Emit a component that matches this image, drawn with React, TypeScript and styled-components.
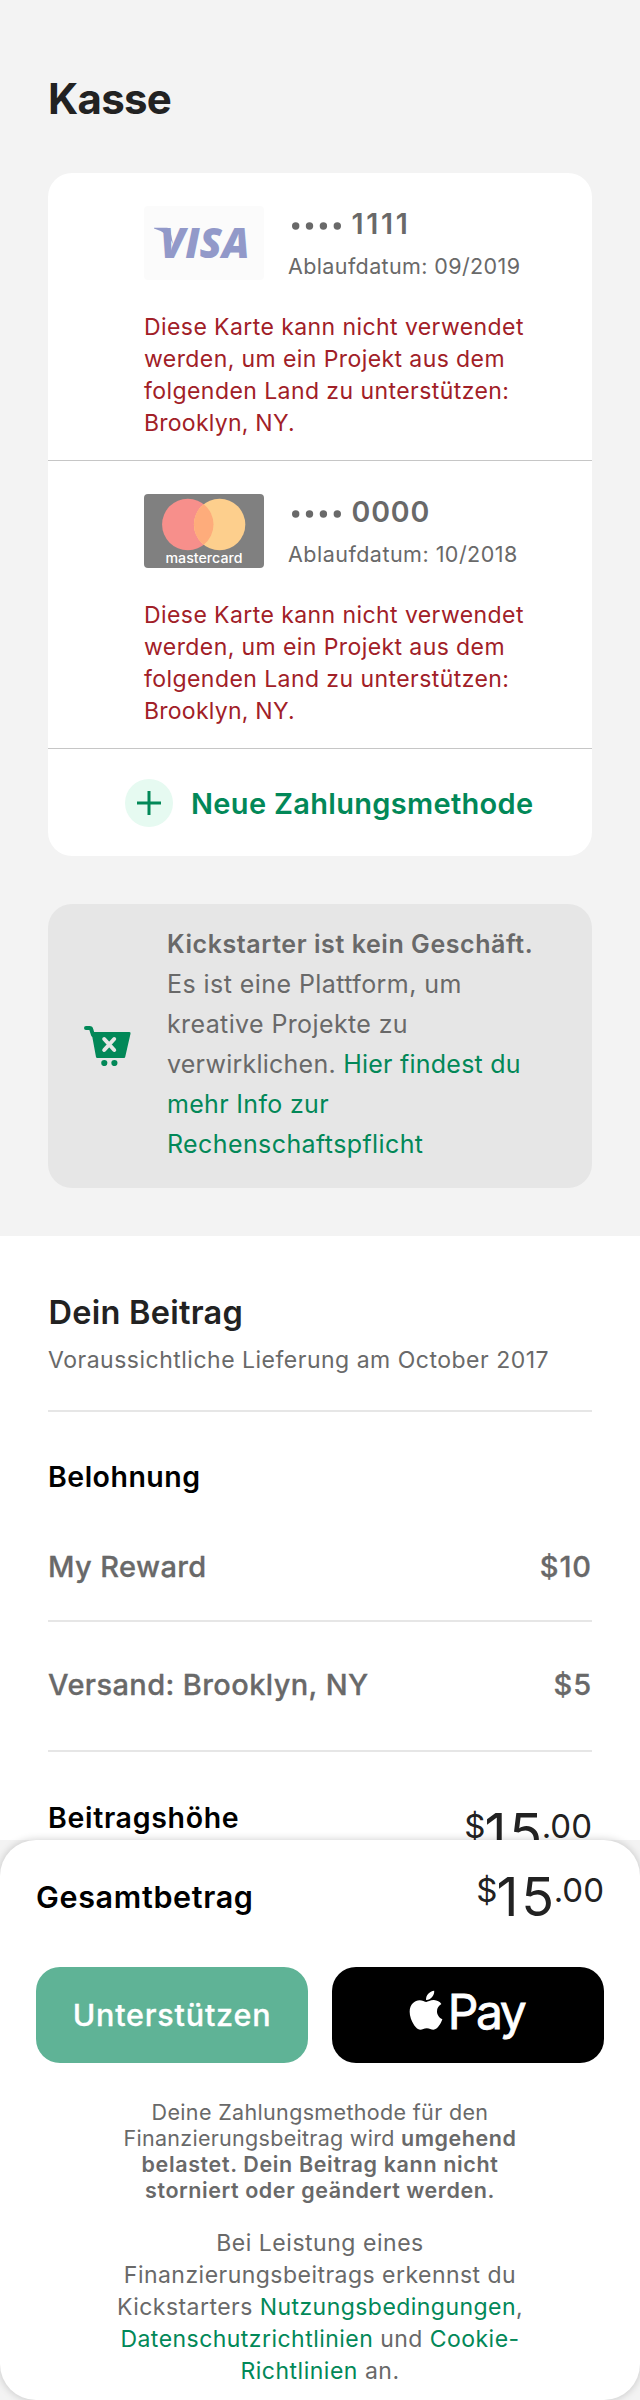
import React from "react";
import styled, { createGlobalStyle } from "styled-components";
import { FaApple } from "react-icons/fa";

const GlobalStyle = createGlobalStyle`
  * { box-sizing: border-box; }
  body {
    margin: 0;
    background: #f3f3f3;
    font-family: Inter, "Liberation Sans", sans-serif;
    -webkit-font-smoothing: antialiased;
  }
`;

const Screen = styled.main`
  width: 640px;
  height: 2400px;
  overflow: hidden;
  display: flex;
  flex-direction: column;
  background: #f3f3f3;
`;

const Line = styled.span<{ $track?: number }>`
  display: block;
  white-space: nowrap;
  letter-spacing: ${(p) => p.$track ?? 0}px;
`;

const Checkout = styled.section`
  height: 1236px;
  padding: 73px 48px 0;
`;

const Title = styled.h1`
  margin: 0 0 49px;
  padding-top: 1px;
  font-size: 42px;
  line-height: 50px;
  font-weight: 700;
  color: #222;
`;

const CardList = styled.div`
  background: #fff;
  border-radius: 24px;
  height: 683px;
`;

const CardRow = styled.article`
  height: 288px;
  padding: 33px 0 0 96px;
  border-bottom: 1px solid #c6c6c6;
`;

const CardHeader = styled.div`
  display: flex;
  gap: 24px;
  margin-bottom: 31px;
`;

const CardInfo = styled.div`
  display: flex;
  flex-direction: column;
  gap: 12px;
  padding-top: 1px;
  color: #696969;
`;

const CardNumber = styled.div`
  display: flex;
  align-items: center;
  height: 34px;
  padding-left: 3.6px;
  font-size: 28.5px;
  line-height: 34px;
  font-weight: 600;
`;

const Dots = styled.svg`
  display: block;
  margin: 3px 10px 0 0;
`;

const Expiry = styled.div`
  font-size: 21.5px;
  line-height: 26px;
`;

const Warning = styled.p`
  margin: 0;
  font-size: 23px;
  line-height: 32px;
  color: #a12027;
`;

const AddMethod = styled.div`
  height: 107px;
  padding-left: 77px;
  display: flex;
  align-items: center;
  gap: 18px;
  color: #028858;
  font-size: 29px;
  line-height: 36px;
  font-weight: 600;

  & > span {
    padding-top: 3px;
  }
`;

const Notice = styled.aside`
  height: 284px;
  margin-top: 48px;
  padding: 20px 0 24px 36px;
  border-radius: 24px;
  background: #e6e6e6;
  display: flex;
  align-items: center;
  gap: 36px;
`;

const NoticeText = styled.p`
  margin: 0;
  font-size: 25px;
  line-height: 40px;
  color: #696969;
`;

const CartIcon = styled.svg`
  display: block;
  flex: none;
  margin-top: 4px;
`;

const Strong = styled.strong<{ $track?: string }>`
  font-weight: 600;
  letter-spacing: ${(p) => p.$track ?? "inherit"};
`;

const Link = styled.a`
  color: #028858;
`;

const Summary = styled.section`
  height: 604px;
  overflow: hidden;
  background: #fff;
  padding: 57px 48px 0;
`;

const SummaryTitle = styled.h2`
  margin: 0 0 13px;
  padding-left: 0.5px;
  font-size: 32.5px;
  line-height: 40px;
  font-weight: 600;
  color: #222;
`;

const Delivery = styled.div`
  height: 66px;
  border-bottom: 2px solid #e6e6e6;
  font-size: 23px;
  line-height: 28px;
  color: #696969;
`;

const GroupTitle = styled.h3`
  margin: 47px 0 0;
  font-size: 28.5px;
  line-height: 36px;
  font-weight: 600;
  color: #000;
`;

const AmountRow = styled.div<{ $top: number; $bottom: number }>`
  display: flex;
  justify-content: space-between;
  padding: ${(p) => p.$top}px 0 ${(p) => p.$bottom}px;
  border-bottom: 2px solid #e6e6e6;
  font-size: 29px;
  line-height: 36px;
  font-weight: 500;
  -webkit-text-stroke: 0.3px #696969;
  color: #696969;
`;

const PledgeRow = styled.div`
  display: flex;
  justify-content: space-between;
  align-items: flex-start;
  padding-top: 48px;
`;

const PledgeLabel = styled.div`
  font-size: 28.5px;
  line-height: 36px;
  font-weight: 600;
  color: #000;
`;

const PriceBox = styled.div<{ $drop?: number }>`
  display: flex;
  align-items: flex-start;
  margin-top: ${(p) => p.$drop ?? 0}px;
  color: #222;
`;

const PriceSmall = styled.span`
  padding-top: 4px;
  font-size: 33px;
  line-height: 33px;
`;

const PriceMain = styled.span`
  margin: 0 -3.5px 0 -1px;
  font-size: 54px;
  line-height: 54px;
  letter-spacing: 3px;
`;

const Footer = styled.footer`
  position: relative;
  height: 560px;
  padding: 30px 36px 0;
  border-radius: 36px;
  background: #fff;
  box-shadow: 0 0 8px rgba(0, 0, 0, 0.2);
`;

const TotalRow = styled.div`
  display: flex;
  justify-content: space-between;
  height: 54px;
`;

const TotalLabel = styled.div`
  font-size: 30.5px;
  line-height: 54px;
  font-weight: 600;
`;

const Buttons = styled.div`
  display: flex;
  gap: 24px;
  margin: 43px 0 36px;
`;

const PayButton = styled.button<{ $bg: string }>`
  width: 272px;
  height: 96px;
  border: 0;
  padding: 0;
  border-radius: 24px;
  background: ${(p) => p.$bg};
  color: #fff;
  font-family: inherit;
  font-size: 30.5px;
  line-height: 36px;
  font-weight: 500;
  -webkit-text-stroke: 0.3px #fff;
  display: flex;
  align-items: center;
  justify-content: center;
`;

const AppleMark = styled(FaApple)`
  width: 34px;
  height: 44.5px;
  margin: 0 4.5px 9px 0;
`;

const PayWord = styled.span`
  padding-bottom: 6px;
  margin-right: 2.5px;
  font-size: 48px;
  line-height: 58px;
  font-weight: 400;
  -webkit-text-stroke: 0.8px #fff;
  letter-spacing: -2.4px;
`;

const Legal = styled.p<{ $size: number; $leading: number }>`
  margin: 0 0 24px;
  text-align: center;
  font-size: ${(p) => p.$size}px;
  line-height: ${(p) => p.$leading}px;
  color: #696969;
`;

const VisaLogo = () => (
  <svg width="120" height="74" viewBox="0 0 120 74">
    <rect width="120" height="74" rx="4" fill="#fbfbfb" />
    <path d="M10 21.7H23Q25.5 21.7 26.2 24L29 38Q24 26.5 10 22.6Z" fill="#9299c9" />
    <text x="16" y="51.5" textLength="89.5" lengthAdjust="spacingAndGlyphs" fontFamily="Open Sans" fontSize="42" fontWeight="800" fontStyle="italic" fill="#9299c9">
      VISA
    </text>
  </svg>
);

const MastercardLogo = () => (
  <svg width="120" height="74" viewBox="0 0 120 74">
    <rect width="120" height="74" rx="4" fill="#808080" />
    <circle cx="43.8" cy="30.5" r="25.7" fill="#f78f8b" />
    <circle cx="75.6" cy="30.5" r="25.7" fill="#fdcf8d" />
    <path d="M59.7 10.3A25.7 25.7 0 0 1 59.7 50.7A25.7 25.7 0 0 1 59.7 10.3Z" fill="#feac7b" />
    <text x="21.5" y="69" textLength="77" lengthAdjust="spacingAndGlyphs" fontFamily="Inter" fontSize="13.5" fontWeight="500" fill="#fff">
      mastercard
    </text>
  </svg>
);

const PlusIcon = () => (
  <svg width="48" height="48" viewBox="0 0 48 48">
    <circle cx="24" cy="24" r="24" fill="#e6faf1" />
    <path d="M12 24H36M24 12V36" stroke="#028858" strokeWidth="3" />
  </svg>
);

type CardProps = { logo: React.ReactNode; digits: string; expiry: string; digitTrack: number; expiryTrack: number };

const SavedCard = ({ logo, digits, expiry, digitTrack, expiryTrack }: CardProps) => (
  <CardRow>
    <CardHeader>
      {logo}
      <CardInfo>
        <CardNumber>
          <Dots width="50" height="8" viewBox="0 0 50 8" fill="#696969">
            <circle cx="3.7" cy="4" r="3.7" />
            <circle cx="17.5" cy="4" r="3.7" />
            <circle cx="31.4" cy="4" r="3.7" />
            <circle cx="45.3" cy="4" r="3.7" />
          </Dots>
          <Line $track={digitTrack}>{digits}</Line>
        </CardNumber>
        <Expiry><Line $track={expiryTrack}>Ablaufdatum: {expiry}</Line></Expiry>
      </CardInfo>
    </CardHeader>
    <Warning>
      <Line $track={0.42}>Diese Karte kann nicht verwendet</Line>
      <Line $track={0.41}>werden, um ein Projekt aus dem</Line>
      <Line $track={0.43}>folgenden Land zu unterstützen:</Line>
      <Line $track={0.25}>Brooklyn, NY.</Line>
    </Warning>
  </CardRow>
);

const Price = ({ drop }: { drop?: number }) => (
  <PriceBox $drop={drop}>
    <PriceSmall>$</PriceSmall>
    <PriceMain>15</PriceMain>
    <PriceSmall>.00</PriceSmall>
  </PriceBox>
);

export default function App() {
  return (
    <Screen>
      <GlobalStyle />
      <Checkout>
        <Title><Line $track={-0.7}>Kasse</Line></Title>
        <CardList>
          <SavedCard logo={<VisaLogo />} digits="1111" expiry="09/2019" digitTrack={2.7} expiryTrack={0.38} />
          <SavedCard logo={<MastercardLogo />} digits="0000" expiry="10/2018" digitTrack={0.8} expiryTrack={0.48} />
          <AddMethod>
            <PlusIcon />
            <Line $track={0.32}>Neue Zahlungsmethode</Line>
          </AddMethod>
        </CardList>
        <Notice>
          <CartIcon width="47" height="40" viewBox="0 0 47 40">
            <path d="M2 2H5.6Q7 2 7.3 3.6L9 9" fill="none" stroke="#028858" strokeWidth="4" strokeLinecap="round" />
            <path d="M7.4 6H45.4Q47 6 46.5 7.8L41.2 31Q41 32 40 32H13.2Q12.2 32 12 31Z" fill="#028858" />
            <path d="M20.2 13L30.2 24M30.2 13L20.2 24" stroke="#e6e6e6" strokeWidth="4" strokeLinecap="round" />
            <circle cx="20.3" cy="37" r="3.1" fill="#028858" />
            <circle cx="30.4" cy="37" r="3.1" fill="#028858" />
          </CartIcon>
          <NoticeText>
            <Line $track={0.57}><Strong>Kickstarter ist kein Geschäft.</Strong></Line>
            <Line $track={0.43}>Es ist eine Plattform, um</Line>
            <Line $track={0.38}>kreative Projekte zu</Line>
            <Line $track={0.24}>verwirklichen. <Link>Hier findest du</Link></Line>
            <Line $track={0.32}><Link>mehr Info zur</Link></Line>
            <Line $track={0.4}><Link>Rechenschaftspflicht</Link></Line>
          </NoticeText>
        </Notice>
      </Checkout>
      <Summary>
        <SummaryTitle><Line $track={0.25}>Dein Beitrag</Line></SummaryTitle>
        <Delivery><Line $track={0.5}>Voraussichtliche Lieferung am October 2017</Line></Delivery>
        <GroupTitle><Line $track={0.5}>Belohnung</Line></GroupTitle>
        <AmountRow $top={54} $bottom={35}>
          <Line $track={0.4}>My Reward</Line>
          <Line $track={0.9}>$10</Line>
        </AmountRow>
        <AmountRow $top={45} $bottom={47}>
          <Line $track={0.4}>Versand: Brooklyn, NY</Line>
          <Line $track={0.9}>$5</Line>
        </AmountRow>
        <PledgeRow>
          <PledgeLabel><Line $track={0.68}>Beitragshöhe</Line></PledgeLabel>
          <Price drop={6} />
        </PledgeRow>
      </Summary>
      <Footer>
        <TotalRow>
          <TotalLabel><Line $track={0.66}>Gesamtbetrag</Line></TotalLabel>
          <Price />
        </TotalRow>
        <Buttons>
          <PayButton $bg="#5fb396"><Line $track={0.8}>Unterstützen</Line></PayButton>
          <PayButton $bg="#000"><AppleMark /><PayWord>Pay</PayWord></PayButton>
        </Buttons>
        <Legal $size={21.5} $leading={26}>
          <Line $track={0.34}>Deine Zahlungsmethode für den</Line>
          <Line $track={0.28}>Finanzierungsbeitrag wird <Strong $track="0.55px">umgehend</Strong></Line>
          <Line $track={0.64}><Strong>belastet. Dein Beitrag kann nicht</Strong></Line>
          <Line $track={0.57}><Strong>storniert oder geändert werden.</Strong></Line>
        </Legal>
        <Legal $size={23} $leading={32}>
          <Line $track={0.53}>Bei Leistung eines</Line>
          <Line $track={0.47}>Finanzierungsbeitrags erkennst du</Line>
          <Line $track={0.45}>Kickstarters <Link>Nutzungsbedingungen</Link>,</Line>
          <Line $track={0.46}><Link>Datenschutzrichtlinien</Link> und <Link>Cookie-</Link></Line>
          <Line $track={0.5}><Link>Richtlinien</Link> an.</Line>
        </Legal>
      </Footer>
    </Screen>
  );
}
